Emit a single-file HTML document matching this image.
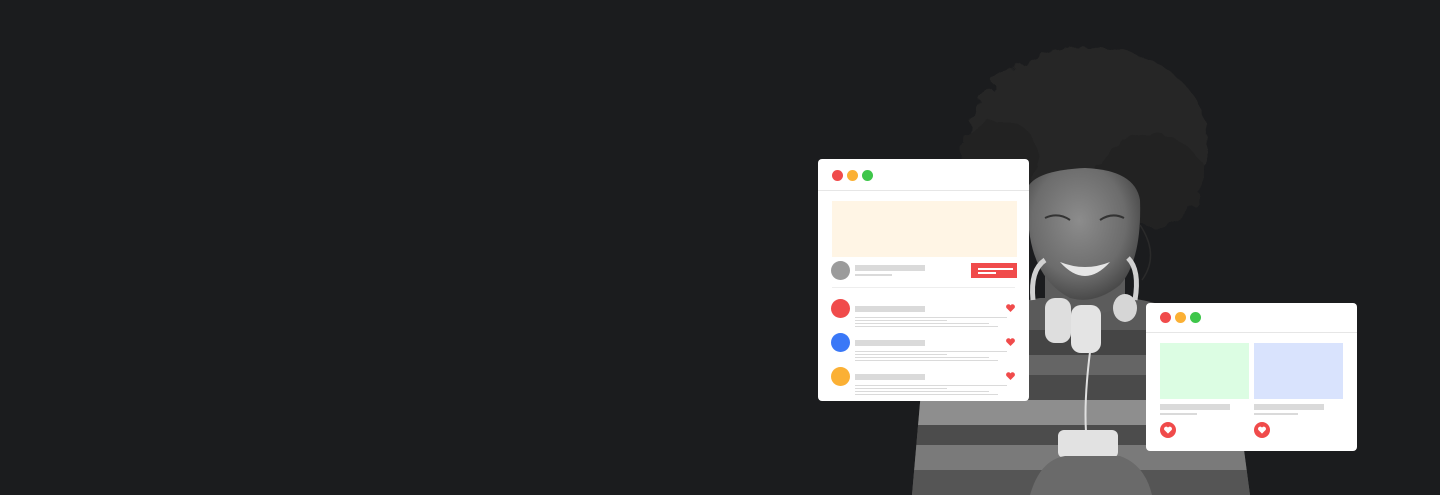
<!DOCTYPE html>
<html><head><style>
*{margin:0;padding:0;box-sizing:border-box}
body{width:1440px;height:495px;background:#1b1c1e;position:relative;overflow:hidden;font-family:"Liberation Sans",sans-serif}
.a{position:absolute}
.card{position:absolute;background:#fff;border-radius:4px}
.dot{position:absolute;width:11px;height:11px;border-radius:50%}
.g{position:absolute;background:#dadada}
</style></head><body>
<svg class="a" style="left:880px;top:30px" width="400" height="465" viewBox="880 30 400 465">
<defs>
<radialGradient id="face" cx="0.45" cy="0.4" r="0.6"><stop offset="0" stop-color="#8c8c8c"/><stop offset="0.7" stop-color="#6c6c6c"/><stop offset="1" stop-color="#4a4a4a"/></radialGradient>
<filter id="rough"><feTurbulence type="fractalNoise" baseFrequency="0.06" numOctaves="2" seed="3"/><feDisplacementMap in="SourceGraphic" scale="16"/></filter>
</defs>
<!-- sweater -->
<path d="M912 495 L922 380 Q935 320 1000 305 L1040 298 L1130 298 Q1210 310 1232 360 L1250 495 Z" fill="#5a5a5a"/>
<clipPath id="sw"><path d="M912 495 L922 380 Q935 320 1000 305 L1040 298 L1130 298 Q1210 310 1232 360 L1250 495 Z"/></clipPath>
<g clip-path="url(#sw)">
<rect x="900" y="330" width="360" height="25" fill="#454545"/>
<rect x="900" y="355" width="360" height="20" fill="#656565"/>
<rect x="900" y="375" width="360" height="25" fill="#4a4a4a"/>
<rect x="900" y="400" width="360" height="25" fill="#8e8e8e"/>
<rect x="900" y="425" width="360" height="20" fill="#4c4c4c"/>
<rect x="900" y="445" width="360" height="25" fill="#7a7a7a"/>
<rect x="900" y="470" width="360" height="25" fill="#555"/>
</g>
<!-- neck -->
<path d="M1045 270 L1045 305 Q1085 325 1125 305 L1125 270 Z" fill="#5c5c5c"/>
<!-- hair -->
<g filter="url(#rough)">
<ellipse cx="1088" cy="135" rx="118" ry="88" fill="#262626"/>
<ellipse cx="1150" cy="180" rx="55" ry="45" fill="#242424"/>
<ellipse cx="1000" cy="160" rx="40" ry="40" fill="#242424"/>
</g>
<!-- face -->
<path d="M1029 185 Q1040 170 1085 168 Q1135 170 1140 200 Q1142 260 1120 285 Q1095 305 1070 298 Q1035 280 1029 230 Z" fill="url(#face)"/>
<path d="M1045 218 Q1058 212 1070 220" stroke="#333" stroke-width="2" fill="none"/>
<path d="M1100 220 Q1112 212 1124 218" stroke="#333" stroke-width="2" fill="none"/>
<path d="M1060 262 Q1085 290 1110 262 Q1085 272 1060 262Z" fill="#e6e6e6"/>
<path d="M1140 225 Q1160 255 1142 280" stroke="#2a2a2a" stroke-width="1.5" fill="none"/>
<!-- headphones -->
<path d="M1033 300 Q1030 270 1045 260 M1135 300 Q1140 270 1128 258" stroke="#d0d0d0" stroke-width="5" fill="none"/>
<rect x="1045" y="298" width="26" height="45" rx="10" fill="#dedede"/>
<rect x="1071" y="305" width="30" height="48" rx="10" fill="#e4e4e4"/>
<ellipse cx="1125" cy="308" rx="12" ry="14" fill="#d6d6d6"/>
<path d="M1090 352 Q1084 400 1086 432" stroke="#e0e0e0" stroke-width="2" fill="none"/>
<!-- phone & hands -->
<rect x="1058" y="430" width="60" height="28" rx="6" fill="#e2e2e2"/>
<path d="M1030 495 Q1040 460 1065 456 L1120 456 Q1145 465 1152 495 Z" fill="#6a6a6a"/>
</svg>

<div class="card" style="left:818px;top:159px;width:211px;height:242px">
<div class="dot" style="left:14px;top:11px;background:#f04b4b"></div>
<div class="dot" style="left:29px;top:11px;background:#fbb034"></div>
<div class="dot" style="left:44px;top:11px;background:#3ec64a"></div>
<div class="a" style="left:0;top:31px;width:211px;height:1px;background:#e6e6e6"></div>
<div class="a" style="left:14px;top:42px;width:185px;height:56px;background:#fff5e5"></div>
<div class="a" style="left:13px;top:102px;width:19px;height:19px;border-radius:50%;background:#9b9b9b"></div>
<div class="g" style="left:37px;top:106px;width:70px;height:6px"></div>
<div class="g" style="left:37px;top:115px;width:37px;height:2px"></div>
<div class="a" style="left:153px;top:104px;width:46px;height:15px;background:#f04b4b"></div>
<div class="a" style="left:160px;top:109px;width:35px;height:2px;background:#fff"></div>
<div class="a" style="left:160px;top:113px;width:18px;height:2px;background:#fff"></div>
<div class="a" style="left:14px;top:128px;width:183px;height:1px;background:#eee"></div>
<div class="a" style="left:13px;top:140px;width:19px;height:19px;border-radius:50%;background:#f04b4b"></div>
<div class="a" style="left:13px;top:174px;width:19px;height:19px;border-radius:50%;background:#3a78f7"></div>
<div class="a" style="left:13px;top:208px;width:19px;height:19px;border-radius:50%;background:#fbb034"></div>
<div class="g" style="left:37px;top:147px;width:70px;height:6px"></div>
<div class="g" style="left:37px;top:158px;width:152px;height:1px"></div><div class="g" style="left:37px;top:161px;width:92px;height:1px"></div><div class="g" style="left:37px;top:164px;width:134px;height:1px"></div><div class="g" style="left:37px;top:167px;width:143px;height:1px"></div>
<div class="g" style="left:37px;top:181px;width:70px;height:6px"></div>
<div class="g" style="left:37px;top:192px;width:152px;height:1px"></div><div class="g" style="left:37px;top:195px;width:92px;height:1px"></div><div class="g" style="left:37px;top:198px;width:134px;height:1px"></div><div class="g" style="left:37px;top:201px;width:143px;height:1px"></div>
<div class="g" style="left:37px;top:215px;width:70px;height:6px"></div>
<div class="g" style="left:37px;top:226px;width:152px;height:1px"></div><div class="g" style="left:37px;top:229px;width:92px;height:1px"></div><div class="g" style="left:37px;top:232px;width:134px;height:1px"></div><div class="g" style="left:37px;top:235px;width:143px;height:1px"></div>
<svg class="a" style="left:188px;top:145px" width="9" height="8" viewBox="0 0 10 9"><path d="M5 9L0.5 4.5A2.5 2.5 0 0 1 5 1.5A2.5 2.5 0 0 1 9.5 4.5Z" fill="#f04b4b"/></svg>
<svg class="a" style="left:188px;top:179px" width="9" height="8" viewBox="0 0 10 9"><path d="M5 9L0.5 4.5A2.5 2.5 0 0 1 5 1.5A2.5 2.5 0 0 1 9.5 4.5Z" fill="#f04b4b"/></svg>
<svg class="a" style="left:188px;top:213px" width="9" height="8" viewBox="0 0 10 9"><path d="M5 9L0.5 4.5A2.5 2.5 0 0 1 5 1.5A2.5 2.5 0 0 1 9.5 4.5Z" fill="#f04b4b"/></svg>
</div>

<div class="card" style="left:1146px;top:303px;width:211px;height:148px">
<div class="dot" style="left:14px;top:9px;background:#f04b4b"></div>
<div class="dot" style="left:29px;top:9px;background:#fbb034"></div>
<div class="dot" style="left:44px;top:9px;background:#3ec64a"></div>
<div class="a" style="left:0;top:29px;width:211px;height:1px;background:#e6e6e6"></div>
<div class="a" style="left:14px;top:40px;width:89px;height:56px;background:#dcfde3"></div>
<div class="a" style="left:108px;top:40px;width:89px;height:56px;background:#d9e3fd"></div>
<div class="g" style="left:14px;top:101px;width:70px;height:6px"></div>
<div class="g" style="left:14px;top:110px;width:37px;height:2px"></div>
<div class="g" style="left:108px;top:101px;width:70px;height:6px"></div>
<div class="g" style="left:108px;top:110px;width:44px;height:2px"></div>
<div class="a" style="left:14px;top:119px;width:16px;height:16px;border-radius:50%;background:#f04b4b"></div>
<div class="a" style="left:108px;top:119px;width:16px;height:16px;border-radius:50%;background:#f04b4b"></div>
<svg class="a" style="left:18px;top:123px" width="8" height="8" viewBox="0 0 10 9"><path d="M5 9L0.5 4.5A2.5 2.5 0 0 1 5 1.5A2.5 2.5 0 0 1 9.5 4.5Z" fill="#fff"/></svg>
<svg class="a" style="left:112px;top:123px" width="8" height="8" viewBox="0 0 10 9"><path d="M5 9L0.5 4.5A2.5 2.5 0 0 1 5 1.5A2.5 2.5 0 0 1 9.5 4.5Z" fill="#fff"/></svg>
</div>
</body></html>
